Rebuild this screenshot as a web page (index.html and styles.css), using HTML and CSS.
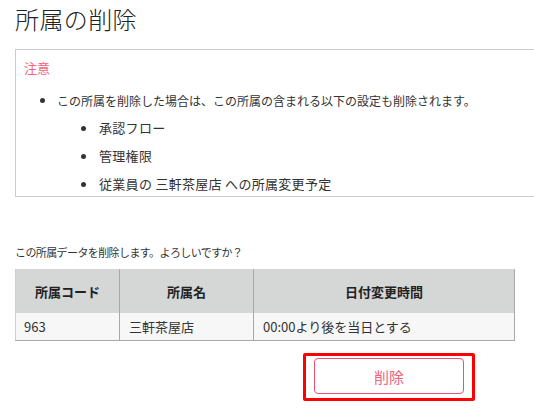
FILE: index.html
```html
<!DOCTYPE html>
<html lang="ja">
<head>
<meta charset="utf-8">
<link rel="stylesheet" href="styles.css">
</head>
<body>
<div class="page">
  <h1 class="title">所属の削除</h1>
  <div class="notice">
    <div class="notice-head">注意</div>
    <ul class="list">
      <li class="item">この所属を削除した場合は、この所属の含まれる以下の設定も削除されます。</li>
      <li class="sub-wrap">
        <ul class="sublist">
          <li class="subitem">承認フロー</li>
          <li class="subitem">管理権限</li>
          <li class="subitem">従業員の 三軒茶屋店 への所属変更予定</li>
        </ul>
      </li>
    </ul>
  </div>
  <p class="confirm">この所属データを削除します。よろしいですか？</p>
  <table class="data">
    <thead>
      <tr>
        <th class="c1">所属コード</th>
        <th class="c2">所属名</th>
        <th class="c3">日付変更時間</th>
      </tr>
    </thead>
    <tbody>
      <tr>
        <td>963</td>
        <td>三軒茶屋店</td>
        <td>00:00より後を当日とする</td>
      </tr>
    </tbody>
  </table>
  <div class="actions">
    <div class="highlight">
      <button class="btn-delete" type="button">削除</button>
    </div>
  </div>
</div>
</body>
</html>
```

FILE: styles.css
```css
html, body {
  margin: 0;
  padding: 0;
  overflow: hidden;
  background: #ffffff;
}
body {
  font-family: "Noto Sans CJK JP", "Noto Sans", sans-serif;
  color: #333333;
}
.page {
  padding: 2px 0 0 15px;
}
.title {
  margin: 0;
  font-size: 24px;
  font-weight: 300;
  line-height: 34px;
  height: 34px;
  color: #222222;
  letter-spacing: 0.4px;
}
.notice {
  margin-top: 13px;
  border: 1px solid #cccccc;
  border-right: none;
  padding: 8px 0 0 8px;
}
.notice-head {
  color: #f5617d;
  font-size: 13px;
  line-height: 20px;
  height: 20px;
}
.list {
  list-style: none;
  margin: 9px 0 -2px 0;
  padding: 0 0 0 33px;
}
.item {
  font-size: 12px;
  line-height: 27px;
  height: 27px;
  letter-spacing: 0px;
  display: flex;
  align-items: center;
  white-space: nowrap;
}
.item::before {
  content: "";
  width: 5px;
  height: 5px;
  border-radius: 50%;
  background: #333333;
  margin-left: -17.5px;
  margin-right: 12.5px;
  flex: none;
}
.sublist {
  list-style: none;
  margin: 0;
  padding: 0 0 0 42px;
}
.subitem {
  font-size: 13px;
  line-height: 28px;
  height: 28px;
  letter-spacing: 0.3px;
  display: flex;
  align-items: center;
  white-space: nowrap;
}
.subitem::before {
  content: "";
  width: 5px;
  height: 5px;
  border-radius: 50%;
  background: #333333;
  margin-left: -18px;
  margin-right: 13px;
  flex: none;
}
.confirm {
  margin: 45px 0 7px 0;
  font-size: 11px;
  line-height: 20px;
  height: 20px;
  letter-spacing: -0.6px;
}
.data {
  border-collapse: collapse;
  width: 500px;
  table-layout: fixed;
  border-left: 1px solid #cfcfcf;
  border-right: 1px solid #a9a9a9;
  border-bottom: 1px solid #a9a9a9;
}
.data th {
  background: #d5d6d6;
  height: 44px;
  font-size: 13px;
  font-weight: 700;
  text-align: center;
  padding: 0;
  color: #222222;
}
.data td {
  background: #f7f7f7;
  height: 27px;
  font-size: 13px;
  padding: 0 0 0 9px;
  color: #333333;
}
.data th + th,
.data td + td {
  border-left: 1px solid #a9a9a9;
}
.c1 { width: 103px; }
.c2 { width: 133px; }
.data td:first-child { padding-left: 8px; }
.actions {
  width: 500px;
  display: flex;
  justify-content: flex-end;
  padding-right: 40px;
  box-sizing: border-box;
  margin-top: 12px;
}
.highlight {
  border: 3px solid #ff0000;
  border-radius: 2px;
  padding: 2px 8px 4px 8px;
}
.btn-delete {
  display: block;
  width: 150px;
  height: 36px;
  border: 1px solid #f0506e;
  border-radius: 4px;
  background: #ffffff;
  color: #f5617d;
  font-family: "Noto Sans CJK JP", sans-serif;
  font-size: 15px;
  padding: 0;
}
```
